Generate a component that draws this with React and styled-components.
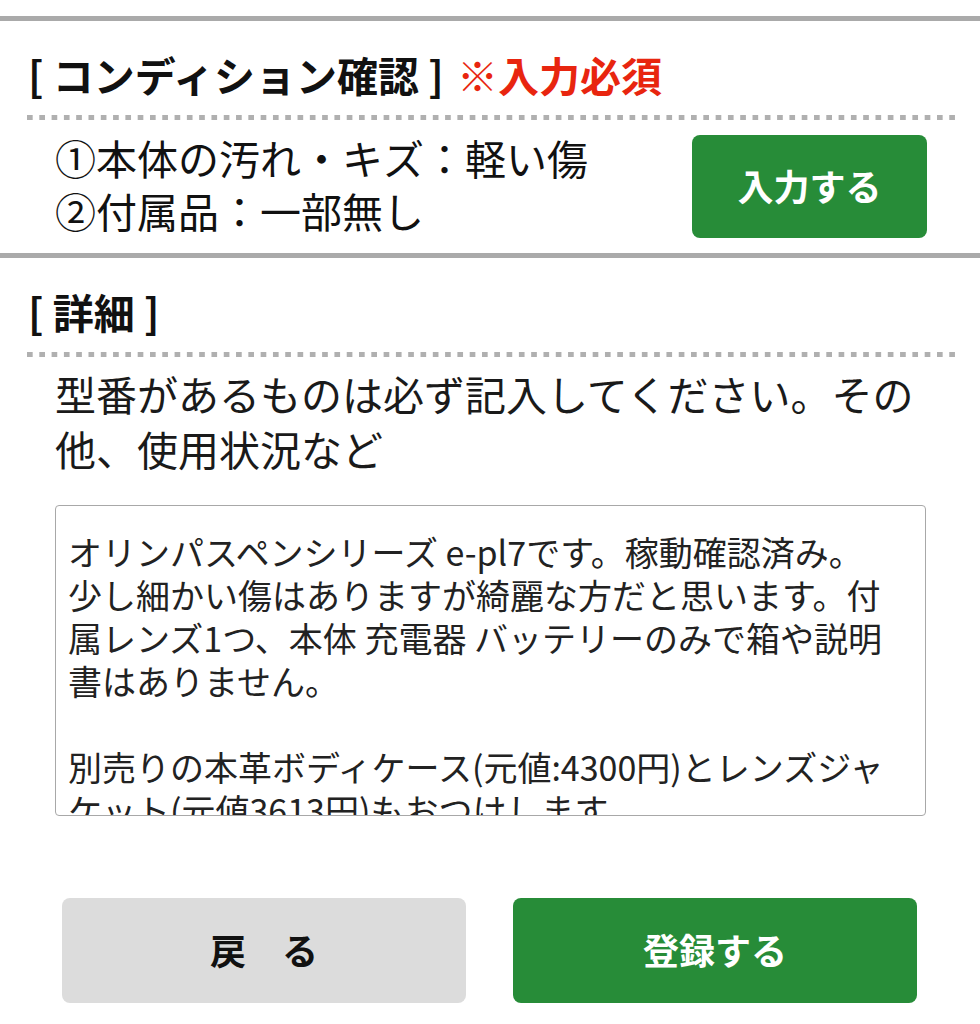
import styled, { createGlobalStyle } from "styled-components";

const GlobalStyle = createGlobalStyle`
  html, body {
    margin: 0;
    padding: 0;
    background: #fff;
  }
  body {
    font-family: "Noto Sans CJK JP", "Noto Sans", sans-serif;
    color: #222;
  }
`;

const conditions = ["①本体の汚れ・キズ：軽い傷", "②付属品：一部無し"];

const detailText = [
  "オリンパスペンシリーズ e-pl7です。稼動確認済み。",
  "少し細かい傷はありますが綺麗な方だと思います。付",
  "属レンズ1つ、本体 充電器 バッテリーのみで箱や説明",
  "書はありません。",
  "",
  "別売りの本革ボディケース(元値:4300円)とレンズジャ",
  "ケット(元値3613円)もおつけします。",
].join("\n");

export default function App() {
  return (
    <>
      <GlobalStyle />
      <Page>
        <Section>
          <Heading>
            [ コンディション確認 ] <Required>※入力必須</Required>
          </Heading>
          <DottedRule />
          <ConditionRow>
            <ConditionList>
              {conditions.map((c) => (
                <ConditionLine key={c}>{c}</ConditionLine>
              ))}
            </ConditionList>
            <Button $variant="primary" $w="235px" $h="103px">
              入力する
            </Button>
          </ConditionRow>
        </Section>
        <Section>
          <Heading>[ 詳細 ]</Heading>
          <DottedRule />
          <Body>
            <Description>
              型番があるものは必ず記入してください。その他、使用状況など
            </Description>
            <DetailBox defaultValue={detailText} />
          </Body>
        </Section>
        <Footer>
          <Button $variant="secondary" $w="404px" $h="105px">
            戻　る
          </Button>
          <Button $variant="primary" $w="404px" $h="105px">
            登録する
          </Button>
        </Footer>
      </Page>
    </>
  );
}

const Page = styled.div`
  width: 980px;
  padding-top: 16px;
`;

const Section = styled.section`
  border-top: 5px solid #aaa;
`;

const Heading = styled.h2`
  margin: 0;
  padding: 29px 0 17px 28px;
  font-size: 41px;
  line-height: 48px;
  font-weight: 700;
  color: #111;
  white-space: nowrap;
`;

const Required = styled.span`
  margin-left: 4px;
  color: #e8250f;
`;

const DottedRule = styled.div`
  height: 5px;
  margin: 0 25px 0 27px;
  background: linear-gradient(to right, #b0b0b0 6px, transparent 6px) 0 0 /
    12.3px 5px repeat-x;
`;

const ConditionRow = styled.div`
  display: flex;
  align-items: center;
  justify-content: space-between;
  padding: 15px 53px 15px 55px;
`;

const ConditionList = styled.div`
  display: flex;
  flex-direction: column;
  margin-top: -6px;
  font-size: 41px;
  color: #111;
`;

const ConditionLine = styled.div`
  height: 53px;
  line-height: 53px;
`;

const Button = styled.button`
  display: flex;
  align-items: center;
  justify-content: center;
  width: ${(p) => p.$w};
  height: ${(p) => p.$h};
  border: none;
  border-radius: 8px;
  padding: 0 0 4px;
  font-family: "Noto Sans CJK JP", "Noto Sans", sans-serif;
  font-size: 36px;
  font-weight: 700;
  cursor: pointer;
  background: ${(p) => (p.$variant === "primary" ? "#278c38" : "#dcdcdc")};
  color: ${(p) => (p.$variant === "primary" ? "#fff" : "#111")};
`;

const Body = styled.div`
  padding: 9px 55px 0 55px;
`;

const Description = styled.p`
  margin: 0;
  font-size: 41px;
  line-height: 55px;
  color: #1a1a1a;
`;

const DetailBox = styled.textarea`
  display: block;
  box-sizing: border-box;
  width: 871px;
  height: 311px;
  margin-top: 29px;
  padding: 24px 12px 0 12px;
  border: 1px solid #a8a8a8;
  border-radius: 4px;
  font-family: "Noto Sans CJK JP", "Noto Sans", sans-serif;
  font-size: 34px;
  line-height: 43px;
  color: #222;
  resize: none;
  overflow: hidden;
  outline: none;
`;

const Footer = styled.div`
  display: flex;
  justify-content: space-between;
  padding: 82px 63px 0 62px;
`;
